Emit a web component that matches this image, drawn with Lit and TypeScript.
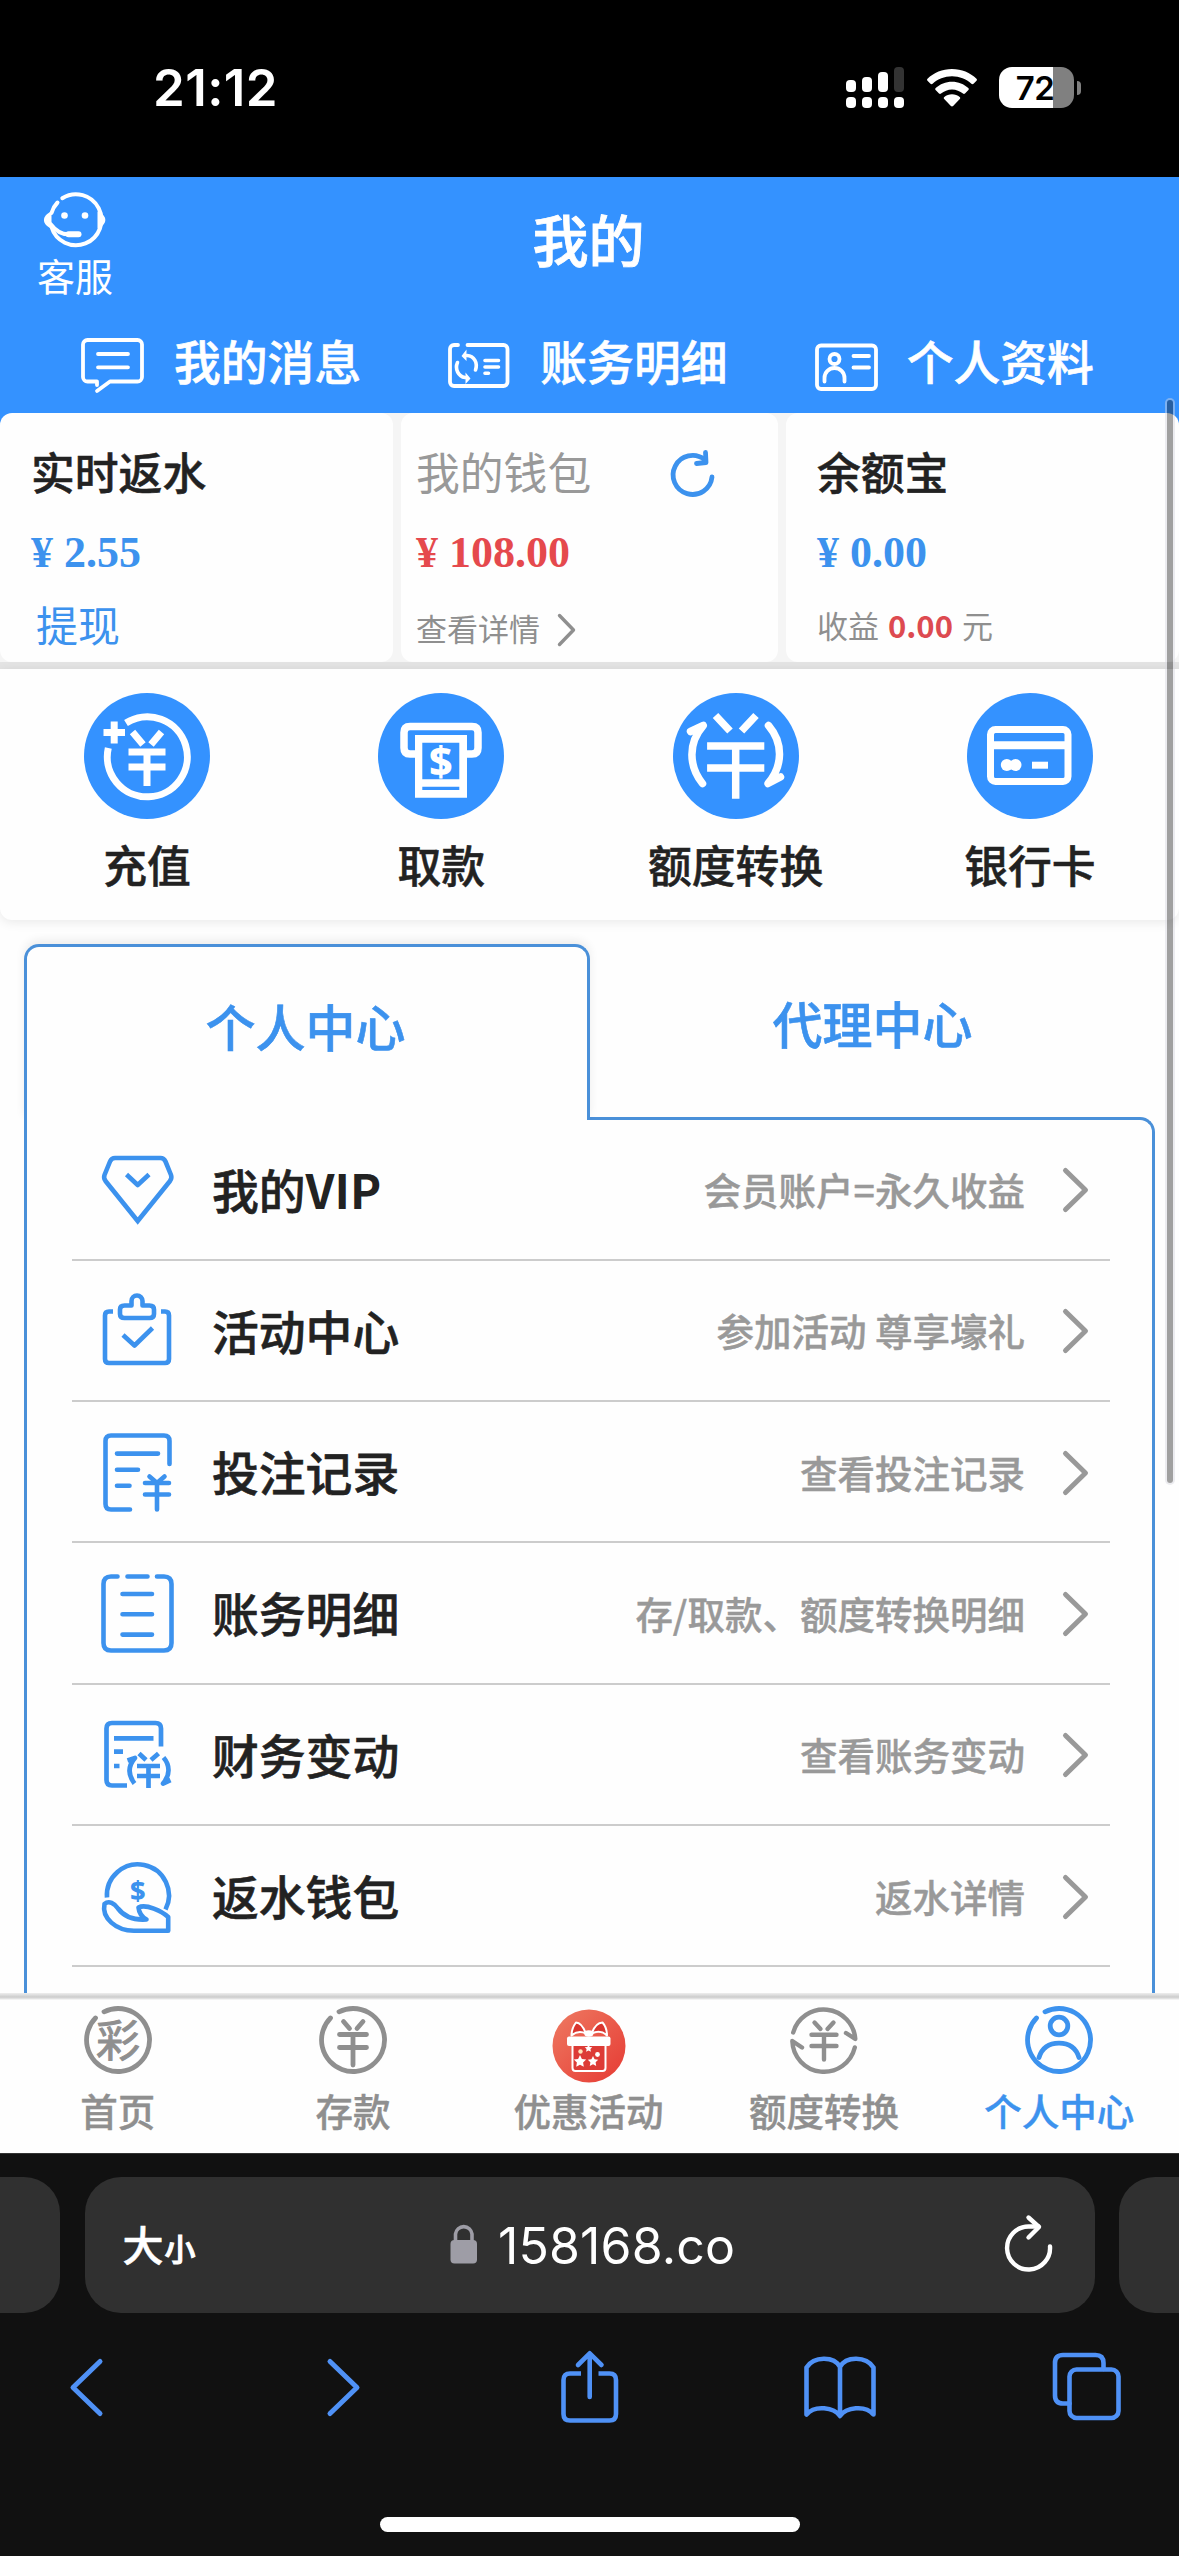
import { LitElement, html, css, svg, nothing } from "lit";
import { customElement, property } from "lit/decorators.js";
import { classMap } from "lit/directives/class-map.js";

const YEN = (cx: number, arm: string, bars: [number, number], half: number, bottom: number) => svg`
  <path d=${arm}/>
  <path d="M${cx - half} ${bars[0]}H${cx + half}M${cx - half} ${bars[1]}H${cx + half}M${cx} ${bars[0]}V${bottom}"/>`;

const STAR = (x: number, y: number, r: number) => {
  const pts = Array.from({ length: 10 }, (_, i) => {
    const a = (Math.PI / 5) * i - Math.PI / 2;
    const d = i % 2 ? r * 0.5 : r;
    return `${(x + d * Math.cos(a)).toFixed(1)},${(y + d * Math.sin(a)).toFixed(1)}`;
  });
  return svg`<polygon points=${pts.join(" ")} fill="#fff" stroke="none"/>`;
};

interface Icon {
  w: number;
  h: number;
  sw: number;
  cap?: string;
  body: unknown;
}

const ICONS: Record<string, Icon> = {
  wifi: { w: 50, h: 38, sw: 7, cap: "butt", body: svg`
    <g fill="currentColor" stroke="none">
      <path d="M25 0C15.4 0 6.800 3.700 .5 9.700c-.6.600-.6 1.500 0 2.100l3 3c.6.600 1.500.6 2.100 0C10.700 10.100 17.500 7.300 25 7.300s14.300 2.800 19.400 7.500c.6.600 1.500.6 2.100 0l3-3c.6-.6.6-1.500 0-2.100C43.200 3.700 34.600 0 25 0z"/>
      <path d="M25 12.700c-6.300 0-12 2.400-16.300 6.300-.6.600-.7 1.500-.1 2.100l3.400 3.400c.5.500 1.400.6 2 .1 3-2.600 6.800-4.200 11-4.200s8 1.600 11 4.200c.6.500 1.500.4 2-.1l3.400-3.400c.6-.6.5-1.500-.1-2.100C37 15.100 31.300 12.700 25 12.700z"/>
      <path d="M25 25.300c-2.900 0-5.600 1-7.700 2.700-.7.500-.7 1.500-.1 2.100l6.700 6.900c.6.600 1.600.6 2.200 0l6.700-6.900c.6-.6.600-1.600-.1-2.100-2.100-1.700-4.800-2.700-7.700-2.700z"/>
    </g>` },
  service: { w: 66, h: 58, sw: 4, body: svg`
    <path d="M20.300 7.200A25.500 25.500 0 1 1 9.500 36M9.500 22A25.500 25.500 0 0 1 15.500 11.500"/>
    <path d="M8.500 33C13 39 20 43.500 27 43.300"/>
    <path d="M26.500 43.300H36.500" stroke-width="6"/>
    <path d="M9.500 20.500C-.5 24.500 -.5 33.500 9.500 37.500zM55.500 20.500C66 24.500 66 33.500 55.500 37.500z" fill="currentColor" stroke="none"/>
    <circle cx="22.500" cy="24.500" r="3.300" fill="currentColor" stroke="none"/>
    <circle cx="43" cy="24.500" r="3.300" fill="currentColor" stroke="none"/>` },
  message: { w: 66, h: 62, sw: 3.800, body: svg`
    <path d="M17 56L30 46.500H57.500a4.500 4.500 0 0 0 4.500-4.500V9.500a4.500 4.500 0 0 0-4.500-4.500H7.500A4.500 4.500 0 0 0 3 9.500V42a4.500 4.500 0 0 0 4.500 4.500H17V50"/>
    <path d="M18 19H48M18 32.300H48"/>` },
  statement: { w: 66, h: 62, sw: 3.800, body: svg`
    <path d="M12 10H8a4 4 0 0 0-4 4V47a4 4 0 0 0 4 4H57.500a4 4 0 0 0 4-4V14a4 4 0 0 0-4-4H21.500"/>
    <path d="M21 20.500C28 21 32 27.500 29.500 35M11.500 27.500C8.500 34 12.500 41.500 19 42.500" stroke-width="3.600"/>
    <path d="M20.500 14.500V26L15.500 21zM19.500 37.500V49L24.500 43.500z" fill="currentColor" stroke="none"/>
    <path d="M39 25.500H52.500M39 32H52.500M39 38.300H42.500" stroke-width="3.600"/>` },
  profile: { w: 66, h: 62, sw: 3.800, body: svg`
    <rect x="4" y="10.500" width="59" height="43.500" rx="4"/>
    <circle cx="21.500" cy="24" r="5"/>
    <path d="M11.500 46.500V43a10 10 0 0 1 20 0V46.500M40.500 21H56M40.500 32.500H56"/>` },
  refresh: { w: 50, h: 50, sw: 4.800, body: svg`
    <path d="M43 27A19.500 19.500 0 1 1 35.500 9.500"/><path d="M36.500 2.500L37 12.500L27.500 13.500"/>` },
  chevron: { w: 28, h: 48, sw: 5, body: svg`<path d="M3.500 4.500L23.500 24L3.500 43.500"/>` },
  smallChevron: { w: 20, h: 34, sw: 3.400, body: svg`<path d="M2.500 2.500L16.500 17L2.500 31.500"/>` },
  recharge: { w: 126, h: 126, sw: 7, cap: "butt", body: svg`
    <path d="M42 30A40 40 0 1 1 24.300 55"/>
    <path d="M19.500 39.500H41M30.200 28.500V50.500"/>
    ${YEN(63, "M48.500 39L59 51.500M77.500 39L67 51.500", [59, 74], 18.500, 93)}` },
  withdraw: { w: 126, h: 126, sw: 7.500, cap: "butt", body: svg`
    <path d="M40 61H32q-6 0-6-6V39.500q0-6 6-6H94q6 0 6 6V55q0 6-6 6H86"/>
    <path d="M37 42H89V104.700H37z" fill="#fff" stroke="none"/>
    <path d="M44.300 49.700H81.300V86.300H44.300zM44.300 93.700H81.300V97H44.300z" fill="#3492ff" stroke="none"/>
    <text x="62.800" y="82.800" font-size="41" class="dollar">$</text>` },
  exchange: { w: 126, h: 126, sw: 7.500, cap: "butt", body: svg`
    ${YEN(62.700, "M42.500 22.500L57 38M83 22.500L68.500 38", [53, 75], 28.600, 105.700)}
    <path d="M17.500 38.500L30.300 32.500C15 50 15.500 73 29.500 90.500M107.500 84L95 90.500C110 73 110.500 50 95.500 32.500" stroke-linecap="round"/>` },
  bankcard: { w: 126, h: 126, sw: 7, cap: "butt", body: svg`
    <rect x="23.500" y="36.500" width="77.500" height="52" rx="5"/>
    <path d="M23 52.200H102" stroke-width="8"/><path d="M65 72.200H81"/>
    <circle cx="39.800" cy="72" r="6" fill="#fff" stroke="none"/><circle cx="48.500" cy="72" r="6" fill="#fff" stroke="none"/>` },
  vip: { w: 84, h: 84, sw: 4.600, body: svg`
    <path d="M19 11H64.500q3.500 0 5 3.500L75 28q1.200 3-1 6L41.700 74L9.500 34q-2.200-3-1-6L14 14.500Q15.500 11 19 11z" stroke-linejoin="miter"/>
    <path d="M30.500 27.500L41.700 38L53 27.500" stroke-linecap="butt"/>` },
  activity: { w: 84, h: 84, sw: 4.600, body: svg`
    <path d="M17 23.500H13q-4 0-4 4V71q0 4 4 4H69q4 0 4-4V27.500q0-4-4-4H65" stroke-linecap="butt"/>
    <path d="M28.500 17.500H35.500V13a5.500 5.500 0 0 1 11 0V17.500H53.500q4.500 0 4.500 4V26q0 4-4.500 4H28.500Q24 30 24 26V21.500q0-4 4.500-4z"/>
    <path d="M27 47L38.500 57.500L56.500 40" stroke-linecap="butt"/>` },
  record: { w: 84, h: 84, sw: 4.600, body: svg`
    <path d="M34 79.500H15q-5.500 0-5.500-5.500V11q0-5.500 5.500-5.500H68q5.500 0 5.500 5.500V34"/>
    <path d="M21 23.600H62M21 39.700H42M21 55.700H33.500"/>
    ${YEN(61, "M53.500 46.500L61 53L68.500 46.500", [53, 64.500], 12, 79.500)}` },
  ledger: { w: 84, h: 84, sw: 4.600, body: svg`
    <path d="M21.500 5.500H15Q7.500 5.500 7.500 13V72q0 7.500 7.500 7.500H68q7.500 0 7.500-7.500V13q0-7.500-7.500-7.500H61M31.500 5.500H51.500"/>
    <path d="M26.500 23H56M26.500 43.300H56M26.500 63.600H56"/>` },
  finance: { w: 84, h: 84, sw: 4.700, cap: "butt", body: svg`
    <path d="M31 73.500H16q-5.500 0-5.500-5.500V16.500Q10.500 11 16 11H59.500q5.500 0 5.500 5.500V34.500"/>
    <path d="M18 26.300H57.500M18 39.700H27M18 54H23.500"/>
    ${YEN(52.500, "M43 41.500L50 48M62.500 41.500L55 48", [54, 64], 11.500, 76)}
    <path d="M31.500 48.500L39 46C32 54 32 63 38.500 71.500M74.500 68L67 71.500C74.500 63 74 53 67.500 45.500"/>` },
  rebate: { w: 84, h: 84, sw: 4.600, cap: "butt", body: svg`
    <path d="M11 43.500A31 31 0 1 1 69.500 55.500"/>
    <path d="M8.500 50C13 46 18.500 49.500 22 54.500C28 62.500 36 66.500 50.500 65.500C46 63 43 59 42.500 53.500C50 49.500 66 57.500 72.200 63V76.700H38C20 76.700 5.500 64 8.500 50z"/>
    <text x="41.700" y="46.300" font-size="27" class="dollar">$</text>` },
  home: { w: 68, h: 68, sw: 4.800, body: svg`
    <path d="M20 5.800A31.500 31.500 0 1 1 11.500 12"/>
    <text x="34" y="51" font-size="44" class="cai">彩</text>` },
  deposit: { w: 68, h: 68, sw: 4.800, body: svg`
    <path d="M20 5.800A31.500 31.500 0 1 1 11.500 12"/>
    ${YEN(34, "M24.500 15.500L30.500 22.500M44 15.500L38 22.500", [28.500, 41.500], 13.500, 59)}` },
  swap: { w: 68, h: 68, sw: 4.400, body: svg`
    <path d="M3.200 26.500A31.700 31.700 0 0 1 65.300 33L56 27M64.800 41.500A31.700 31.700 0 0 1 2.300 35L12 41.500"/>
    ${YEN(34, "M24.500 16.500L30.500 23M43.500 16.500L37.500 23", [28.700, 40], 12.500, 53.500)}` },
  me: { w: 68, h: 68, sw: 4.800, body: svg`
    <path d="M20 5.800A31.500 31.500 0 1 1 11.500 12"/>
    <circle cx="34" cy="20" r="8.800"/><path d="M14 51.500C17 42 24.500 37.200 34 37.200S51 42 54 51.500"/>` },
  gift: { w: 74, h: 74, sw: 2, body: svg`
    <defs><linearGradient id="g" x1="0" y1="0" x2="1" y2="1">
      <stop offset="0" stop-color="#ee7a62"/><stop offset="1" stop-color="#e63a33"/></linearGradient></defs>
    <circle cx="37" cy="37" r="36.500" fill="url(#g)" stroke="none"/>
    <path d="M20.500 37V59q0 3 3 3H50.500q3 0 3-3V37" fill="#dd3b36" stroke="#fff"/>
    <rect x="15" y="27.500" width="43.500" height="9.500" rx="2" fill="#fff" stroke="none"/>
    <path d="M34 24.500C31 17 28 13.500 24 13.500C21 17.500 19.500 21 19.500 26.500C24 22.500 29 22 34 24.500zM39.500 24.500C42.500 17 46.500 13.500 50.500 13.500C54 17.500 55 21 55 26.500C51 22.500 45 22 39.500 24.500z" fill="#d9352f" stroke="#fff"/>
    <ellipse cx="36.800" cy="24.500" rx="4.600" ry="3.200" fill="#fff" stroke="none"/>
    ${STAR(28, 52.500, 6.500)}${STAR(41, 52.500, 5.500)}${STAR(36.500, 39.500, 4)}
    <circle cx="28.500" cy="42.500" r="2.200" fill="#ffe2b8" stroke="none"/><circle cx="45.500" cy="45.500" r="2.400" fill="#fff" stroke="none"/>` },
  lock: { w: 28, h: 42, sw: 3.600, body: svg`
    <rect x="0.500" y="17" width="26.500" height="23.500" rx="4" fill="currentColor" stroke="none"/>
    <path d="M5.500 19V11a8.300 8.300 0 0 1 16.500 0V19"/>` },
  reload: { w: 50, h: 60, sw: 4.400, body: svg`
    <path d="M46 32.500A21.500 21.500 0 1 1 24.500 12.500H34.500"/><path d="M24.500 3.500L35 13L24.500 23.500"/>` },
  back: { w: 40, h: 60, sw: 5, body: svg`<path d="M33 4.500L6 30.500L33 56.500"/>` },
  forward: { w: 40, h: 60, sw: 5, body: svg`<path d="M7 4.500L34 30.500L7 56.500"/>` },
  share: { w: 60, h: 76, sw: 4.600, body: svg`
    <path d="M21 24.500H10q-6.500 0-6.500 6.500V65q0 6.500 6.500 6.500H49.500q6.500 0 6.500-6.500V31q0-6.500-6.500-6.500H38.500" stroke-linecap="butt"/>
    <path d="M29.700 48V4.500M18 16L29.700 4.300L41.500 16"/>` },
  book: { w: 74, h: 64, sw: 4.600, body: svg`
    <path d="M37 61C31 52.500 12 49.500 3.500 59.500V12.500C11 1 31 1 37 12C43 1 63 1 70.500 12.500V59.500C62 49.500 43 52.500 37 61zM37 12V60"/>` },
  tabs: { w: 70, h: 70, sw: 4.600, body: svg`
    <rect x="17.500" y="17.500" width="49" height="48.500" rx="7"/>
    <path d="M17.500 51.500H11Q3 51.500 3 43.500V11Q3 3 11 3H43.500Q51.500 3 51.500 11V17"/>` },
};

@customElement("line-icon")
export class LineIcon extends LitElement {
  @property() name = "";

  static styles = css`
    :host { display: block; flex: none; line-height: 0; -webkit-text-stroke: 0; }
    svg { display: block; overflow: visible; }
    .dollar { font-family: "Noto Sans", sans-serif; font-weight: 800; text-anchor: middle; fill: currentColor; stroke: none; }
    .cai { font-family: "Noto Sans CJK SC", sans-serif; font-weight: 400; text-anchor: middle; fill: currentColor; stroke: currentColor; stroke-width: 1px; }
  `;

  render() {
    const icon = ICONS[this.name];
    if (!icon) return nothing;
    return html`<svg width=${icon.w} height=${icon.h} viewBox="0 0 ${icon.w} ${icon.h}" fill="none"
      stroke="currentColor" stroke-width=${icon.sw} stroke-linecap=${icon.cap ?? "round"} stroke-linejoin="round">${icon.body}</svg>`;
  }
}

const SHORTCUTS = [
  { icon: "message", label: "我的消息" },
  { icon: "statement", label: "账务明细" },
  { icon: "profile", label: "个人资料" },
];

const ACTIONS = [
  { icon: "recharge", label: "充值" },
  { icon: "withdraw", label: "取款" },
  { icon: "exchange", label: "额度转换" },
  { icon: "bankcard", label: "银行卡" },
];

const ROWS = [
  { icon: "vip", label: "我的", strong: "VIP", note: "会员账户=永久收益" },
  { icon: "activity", label: "活动中心", note: "参加活动 尊享壕礼" },
  { icon: "record", label: "投注记录", note: "查看投注记录" },
  { icon: "ledger", label: "账务明细", note: "存/取款、额度转换明细" },
  { icon: "finance", label: "财务变动", note: "查看账务变动" },
  { icon: "rebate", label: "返水钱包", note: "返水详情" },
];

const TABS = [
  { icon: "home", label: "首页" },
  { icon: "deposit", label: "存款" },
  { icon: "gift", label: "优惠活动" },
  { icon: "swap", label: "额度转换" },
  { icon: "me", label: "个人中心", active: true },
];

@customElement("app-root")
export class AppRoot extends LitElement {
  static styles = css`
    :host {
      display: flex; flex-direction: column; position: relative; box-sizing: border-box;
      width: 1179px; height: 2556px; overflow: hidden; background: #fefefe; color: #222;
      font-family: "Noto Sans CJK SC", sans-serif; font-weight: 500; white-space: nowrap;
    }
    * { box-sizing: border-box; }

    .status { height: 177px; flex: none; background: #000; color: #fff; display: flex; align-items: flex-start; padding: 0 98px 0 153px; font-family: Inter, sans-serif; }
    .clock { flex: 1; font-size: 51px; line-height: 60px; font-weight: 600; margin-top: 58px; letter-spacing: .4px; }
    .signal { display: grid; grid-template-columns: repeat(4, 10px); grid-template-rows: 25px 11px; gap: 5px 6px; align-items: end; margin: 67px 23px 0 0; }
    .signal i { border-radius: 4px; background: #fff; height: 11px; }
    .signal .b1 { height: 12px; } .signal .b2 { height: 15px; } .signal .b3 { height: 20px; } .signal .b4 { height: 25px; background: #333; }
    .wifi { margin: 69px 22px 0 0; }
    .battery { margin-top: 67px; width: 75px; height: 41px; border-radius: 13px; background: linear-gradient(90deg, #fff 72%, #808080 72%); color: #000; font-size: 33px; line-height: 42px; font-weight: 600; text-align: center; letter-spacing: -.5px; padding-right: 3px; }
    .nub { width: 4px; height: 14px; margin: 81px 0 0 3px; border-radius: 0 4px 4px 0; background: #808080; }

    .head { height: 236px; flex: none; background: #3492ff; color: #fff; }
    .titlebar { height: 146px; display: grid; grid-template-columns: 1fr auto 1fr; }
    .service { display: flex; flex-direction: column; align-items: center; width: 150px; padding-top: 14px; font-weight: 400; font-size: 38px; line-height: 50px; }
    .service line-icon { margin-left: -1px; }
    .service span { margin-top: 1px; }
    .title { font-size: 56px; line-height: 70px; padding-top: 26px; -webkit-text-stroke: .8px; margin-left: -2px; }
    .shortcuts { display: flex; padding-left: 80px; }
    .shortcut { width: 367.500px; display: flex; align-items: flex-start; font-size: 46.800px; line-height: 60px; -webkit-text-stroke: .6px; }
    .shortcut line-icon { margin: 12px 28px 0 0; }
    .shortcut span { padding-top: 7px; }

    .cards {
      height: 249px; flex: none; display: grid; grid-template-columns: 393px 377px 393px; gap: 8px;
      background: linear-gradient(#3492ff, #3492ff) 0 0 / 12px 12px no-repeat, linear-gradient(#3492ff, #3492ff) 100% 0 / 12px 12px no-repeat, #f5f5f5;
    }
    .card { background: #fefefe; border-radius: 12px; padding: 28px 0 0 31px; display: grid; grid-template-rows: 60px 76px 1fr; align-items: start; }
    .wallet { padding-left: 15px; }
    .card-title { font-size: 43.800px; line-height: 60px; display: flex; -webkit-text-stroke: .5px; }
    .card-title.muted { color: #999; font-weight: 400; -webkit-text-stroke: 0; }
    .card-title line-icon { color: #3c92ee; margin: 9px 0 0 78px; }
    .amount { font: bold 44px/50px "Liberation Serif", serif; color: #3c92ee; padding-top: 27px; }
    .amount.red { color: #e5494d; }
    .foot { font-size: 31px; line-height: 40px; color: #8f8f8f; font-weight: 400; padding-top: 31px; display: flex; }
    .foot.link { font-size: 42px; line-height: 50px; padding: 22px 0 0 5px; color: #3c92ee; }
    .foot line-icon { margin: 5px 0 0 17px; color: #8f8f8f; }
    .foot b { color: #dd4a50; margin: 0 9px; }
    .foot.gain { padding-top: 28px; }

    .band { height: 7px; flex: none; background: #e4e4e4; }
    .actions { height: 251px; flex: none; background: #fefefe; display: grid; grid-template-columns: repeat(4, 1fr); padding: 24px 2px 0 0; border-radius: 0 0 12px 12px; box-shadow: 0 2px 12px rgba(0,0,0,.09); }
    .action { display: flex; flex-direction: column; align-items: center; font-size: 43.800px; line-height: 60px; -webkit-text-stroke: .5px; }
    .disc { width: 126px; height: 126px; border-radius: 50%; background: #3492ff; color: #fff; margin-bottom: 15px; }

    .center { flex: 1; min-height: 0; padding: 24px 24px 0; overflow: hidden; }
    .switch { display: grid; grid-template-columns: 566px 1fr; height: 173px; font-size: 50px; line-height: 60px; text-align: center; color: #3c92ee; -webkit-text-stroke: .6px; }
    .on { position: relative; height: 176px; border: 3px solid #4a90d9; border-bottom: 0; border-radius: 15px 15px 0 0; padding: 48px 3px 0 0; background: #fefefe; box-shadow: 0 -4px 10px rgba(0,0,0,.07); clip-path: inset(-14px -10px 0 -10px); }
    .off { padding-top: 48px; }
    .list { border: 3px solid #4a90d9; border-bottom: 0; border-top-right-radius: 15px; padding: 0 42px 0 45px; height: 900px; }
    .row { height: 141.350px; border-bottom: 2px solid #ccc; display: flex; align-items: center; padding: 0 20px 0 24px; }
    .row:first-child { height: 140.500px; }
    .row line-icon { color: #3c92ee; }
    .label { font-size: 46.800px; line-height: 60px; margin: -1px 0 0 32px; flex: 1; -webkit-text-stroke: .6px; }
    .label b { font-weight: 700; -webkit-text-stroke: 0; }
    .note { font-size: 37.500px; line-height: 50px; color: #999; margin: 0 37px 0 0; -webkit-text-stroke: .4px; }
    .row .go { color: #999; margin-top: 2px; }

    .tabs { height: 160px; flex: none; background: linear-gradient(#eee, #ccc 4px, #e8e8e8 6px, #fefefe 7px); display: grid; grid-template-columns: repeat(5, 1fr); padding: 13px 2px 0 0; }
    .tab { display: flex; flex-direction: column; align-items: center; color: #8f8f8f; font-size: 37.500px; line-height: 50px; -webkit-text-stroke: .4px; }
    .pic { height: 79px; }
    .pic.gift { padding-top: 3px; margin-left: 2px; }
    .tab.active { color: #3c92ee; }

    .browser { height: 403px; flex: none; background: #111; display: flex; flex-direction: column; align-items: center; border-top: 1px solid #333; }
    .omni { display: grid; grid-template-columns: 60px 1010px 60px; gap: 24.500px; height: 136px; margin-top: 23px; }
    .stub { background: #303030; border-radius: 0 36px 36px 0; }
    .stub.right { border-radius: 36px 0 0 36px; }
    .address { background: #303030; border-radius: 36px; color: #fff; display: grid; grid-template-columns: 1fr auto 1fr; align-items: center; padding: 0 41px 0 38px; }
    .size { font-size: 41px; display: flex; align-items: baseline; line-height: 60px; -webkit-text-stroke: .6px; }
    .size small { font-size: 31px; margin-left: 1px; -webkit-text-stroke: 1px; }
    .url { display: flex; align-items: center; font: 400 50px/60px Inter, sans-serif; letter-spacing: .15px; margin: 2px 0 0 9px; }
    .url line-icon { color: #9e9da6; margin: -4px 20px 0 0; }
    .reload { justify-self: end; margin-top: -2px; }
    .tools { width: 100%; display: grid; grid-template-columns: 256px 236.500px 243.500px 249px 70px; align-items: center; height: 76px; margin-top: 36px; padding-left: 67px; color: #4f91f6; }
    .home-bar { width: 420px; height: 15px; border-radius: 8px; background: #fff; margin-top: 92px; }

    .scrollbar { position: absolute; left: 1167px; top: 400px; width: 6px; height: 1083px; border-radius: 4px; background: rgba(20,20,20,.4); box-shadow: 0 0 0 2px rgba(215,215,225,.45); }
  `;

  render() {
    return html`
      <div class="status">
        <span class="clock">21:12</span>
        <div class="signal"><i class="b1"></i><i class="b2"></i><i class="b3"></i><i class="b4"></i><i></i><i></i><i></i><i></i></div>
        <line-icon class="wifi" name="wifi"></line-icon>
        <div class="battery">72</div><div class="nub"></div>
      </div>

      <header class="head">
        <div class="titlebar">
          <div class="service"><line-icon name="service"></line-icon><span>客服</span></div>
          <div class="title">我的</div>
        </div>
        <nav class="shortcuts">
          ${SHORTCUTS.map((s) => html`<div class="shortcut"><line-icon name=${s.icon}></line-icon><span>${s.label}</span></div>`)}
        </nav>
      </header>

      <section class="cards">
        <div class="card">
          <div class="card-title">实时返水</div>
          <div class="amount">¥ 2.55</div>
          <div class="foot link">提现</div>
        </div>
        <div class="card wallet">
          <div class="card-title muted">我的钱包<line-icon name="refresh"></line-icon></div>
          <div class="amount red">¥ 108.00</div>
          <div class="foot">查看详情<line-icon name="smallChevron"></line-icon></div>
        </div>
        <div class="card">
          <div class="card-title">余额宝</div>
          <div class="amount">¥ 0.00</div>
          <div class="foot gain">收益<b>0.00</b>元</div>
        </div>
      </section>
      <div class="band"></div>

      <section class="actions">
        ${ACTIONS.map((a) => html`<div class="action"><line-icon class="disc" name=${a.icon}></line-icon>${a.label}</div>`)}
      </section>

      <section class="center">
        <div class="switch">
          <div class="on">个人中心</div>
          <div class="off">代理中心</div>
        </div>
        <div class="list">
          ${ROWS.map((r) => html`<div class="row">
            <line-icon name=${r.icon}></line-icon>
            <span class="label">${r.label}${r.strong ? html`<b>${r.strong}</b>` : nothing}</span>
            <span class="note">${r.note}</span>
            <line-icon class="go" name="chevron"></line-icon>
          </div>`)}
        </div>
      </section>

      <nav class="tabs">
        ${TABS.map((t) => html`<div class=${classMap({ tab: true, active: !!t.active })}>
          <div class=${classMap({ pic: true, gift: t.icon === "gift" })}><line-icon name=${t.icon}></line-icon></div>
          ${t.label}
        </div>`)}
      </nav>

      <footer class="browser">
        <div class="omni">
          <div class="stub"></div>
          <div class="address">
            <span class="size">大<small>小</small></span>
            <span class="url"><line-icon name="lock"></line-icon>158168.co</span>
            <line-icon class="reload" name="reload"></line-icon>
          </div>
          <div class="stub right"></div>
        </div>
        <div class="tools">
          <line-icon name="back"></line-icon>
          <line-icon name="forward"></line-icon>
          <line-icon name="share"></line-icon>
          <line-icon name="book"></line-icon>
          <line-icon name="tabs"></line-icon>
        </div>
        <div class="home-bar"></div>
      </footer>
      <div class="scrollbar"></div>
    `;
  }
}
